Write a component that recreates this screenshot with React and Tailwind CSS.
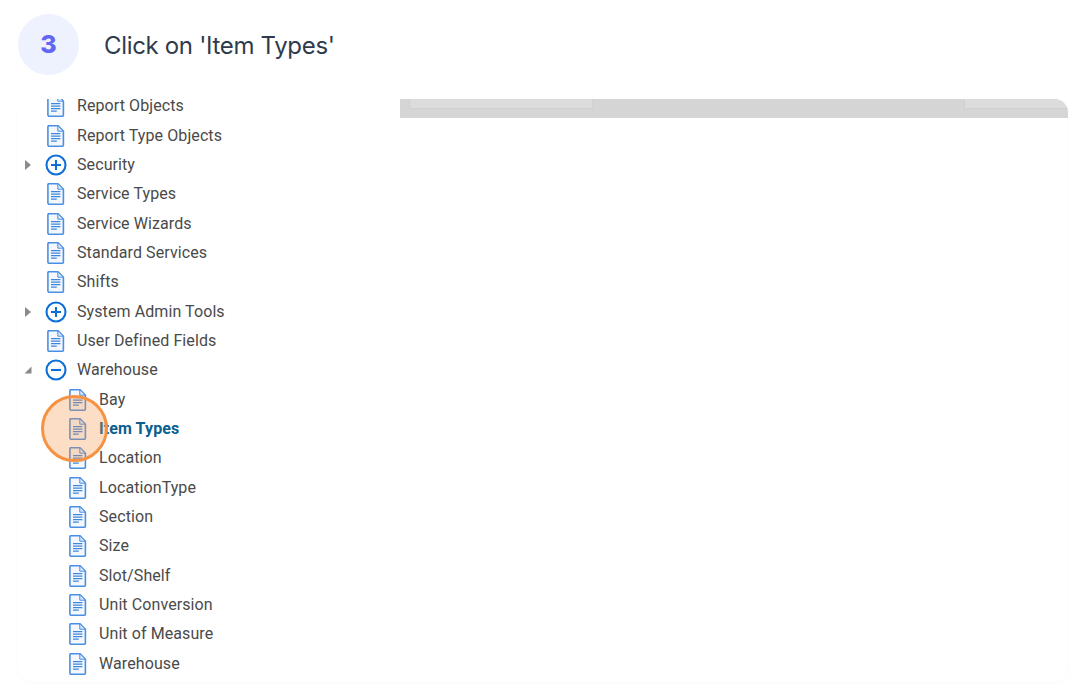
import React from 'react';

const DocIcon = () => (
    <svg width="18" height="22" viewBox="0 0 18 22" fill="none" className="shrink-0">
        <path d="M0.9 1.9C0.9 1.1 1.5 0.6 2.2 0.6H10.8L16.4 6.2V20C16.4 20.8 15.8 21.3 15.1 21.3H2.2C1.5 21.3 0.9 20.8 0.9 20V1.9Z" fill="#f4f8fe" stroke="#4a90e2" strokeWidth="1.6" strokeLinejoin="round" />
        <path d="M10.8 0.6V6.2H16.4Z" stroke="#4a90e2" strokeWidth="1" fill="#dbe9fa" />
        <path d="M4 8.6H13.4M4 11.1H13.4M4 13.6H13.4M4 16.1H9.8" stroke="#3f86dc" strokeWidth="1.4" />
    </svg>
);

const ToggleIcon = ({ minus }) => (
    <svg width="22" height="22" viewBox="0 0 22 22" fill="none" className="shrink-0 -ml-[1px]">
        <circle cx="11" cy="11" r="9.5" stroke="#0f6fd6" strokeWidth="2.1" />
        <path d="M6 11H16" stroke="#0f6fd6" strokeWidth="2.1" />
        {!minus && <path d="M11 6V16" stroke="#0f6fd6" strokeWidth="2.1" />}
    </svg>
);

const Arrow = ({ open }) => (
    <svg width="8" height="10" viewBox="0 0 8 10" className="shrink-0">
        {open
            ? <path d="M7.5 1.5V8.5H0.5Z" fill="#8a8a8a" />
            : <path d="M1 0L7 5L1 10Z" fill="#8a8a8a" />}
    </svg>
);

const rows = [
    { label: 'Report Objects' },
    { label: 'Report Type Objects' },
    { label: 'Security', toggle: 'plus' },
    { label: 'Service Types' },
    { label: 'Service Wizards' },
    { label: 'Standard Services' },
    { label: 'Shifts' },
    { label: 'System Admin Tools', toggle: 'plus' },
    { label: 'User Defined Fields' },
    { label: 'Warehouse', toggle: 'minus' },
    { label: 'Bay', child: true },
    { label: 'Item Types', child: true, active: true },
    { label: 'Location', child: true },
    { label: 'LocationType', child: true },
    { label: 'Section', child: true },
    { label: 'Size', child: true },
    { label: 'Slot/Shelf', child: true },
    { label: 'Unit Conversion', child: true },
    { label: 'Unit of Measure', child: true },
    { label: 'Warehouse', child: true },
];

const TreeRow = ({ row }) => (
    <div className="flex items-center h-[29.35px] font-['Roboto',sans-serif] text-[16px] tracking-[0.09px]">
        <div className="w-[27px] flex justify-end pr-[13px]">
            {row.toggle && <Arrow open={row.toggle === 'minus'} />}
        </div>
        <div className={`flex justify-center ${row.child ? 'w-[22px] ml-[22px]' : 'w-[22px]'}`}>
            {row.toggle ? <ToggleIcon minus={row.toggle === 'minus'} /> : <DocIcon />}
        </div>
        <span className={`ml-[10px] ${row.active ? 'font-bold text-[#0b5f8f]' : 'text-[#4a4a4a]'}`}>
            {row.label}
        </span>
    </div>
);

const App = () => {
    return (
        <div className="relative w-[1076px] h-[698px] bg-white overflow-hidden">
            <div className="flex items-center h-[99px] pl-[18px] pb-[10px]">
                <div className="w-[61px] h-[61px] rounded-full bg-[#eef2fe] flex items-center justify-center font-['Inter',sans-serif] font-extrabold text-[25px] text-[#6366f1]">
                    3
                </div>
                <span className="ml-[25px] pt-[2px] font-['Inter',sans-serif] text-[24px] tracking-[-0.33px] text-[#2f3b4c]">
                    Click on 'Item Types'
                </span>
            </div>

            <div className="ml-[18px] w-[1050px] h-[583px] rounded-[14px] overflow-hidden bg-white shadow-[0_1px_6px_rgba(0,0,0,0.025)] flex">
                <div className="w-[382px] -mt-[7.5px] shrink-0">
                    {rows.map((row, i) => <TreeRow key={i} row={row} />)}
                </div>
                <div className="flex-1">
                    <div className="h-[19px] bg-[#d5d5d5] flex justify-between pl-[9px]">
                        <div className="w-[184px] h-[10px] bg-[#dcdcdc] border-x border-b border-[#d0d0d0]" />
                        <div className="w-[104px] h-[10px] bg-[#dcdcdc] border-l border-b border-[#d0d0d0]" />
                    </div>
                </div>
            </div>

            {/* click highlight */}
            <div className="absolute left-[41px] top-[395px] w-[67px] h-[67px] rounded-full border-[3px] border-[#f59342] bg-[#f59342]/30" />
        </div>
    );
};

export default App;
